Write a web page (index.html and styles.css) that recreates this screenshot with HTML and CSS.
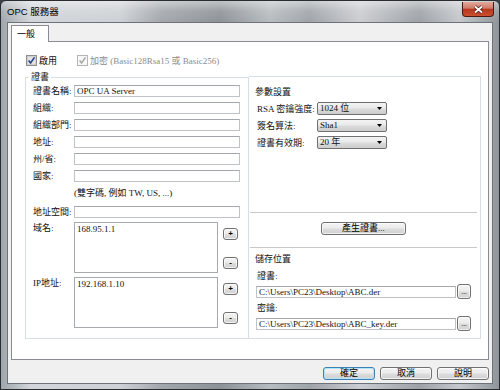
FILE: index.html
```html
<!DOCTYPE html>
<html>
<head>
    <title>OPC 服務器</title>
    <link rel="stylesheet" href="styles.css">
</head>
<body>
    <div class="window">
        <!-- glass title bar -->
        <div class="titlebar">
            <span class="title">OPC 服務器</span>
            <span class="close-btn">
                <svg width="11" height="9" viewBox="0 0 11 9">
                    <path d="M2 1.5 L9 7.5 M9 1.5 L2 7.5" stroke="#4a1810" stroke-width="3.4" fill="none"/>
                    <path d="M2 1.5 L9 7.5 M9 1.5 L2 7.5" stroke="#fff" stroke-width="1.8" fill="none"/>
                </svg>
            </span>
        </div>

        <div class="client">
            <div class="tabs"><span class="tab">一般</span></div>

            <div class="tab-page">
                <div class="checks">
                    <span class="check">
                        <svg width="11" height="11" viewBox="0 0 11 11">
                            <rect x="0.5" y="0.5" width="10" height="10" fill="#f6f6f6" stroke="#8e8f8f"/>
                            <rect x="1.5" y="1.5" width="8" height="8" fill="#e4e4e4" stroke="#cfcfcf"/>
                            <path d="M2.6 5.4 L4.6 7.9 L8.5 2.4" fill="none" stroke="#23418c" stroke-width="1.6"/>
                        </svg>
                        啟用
                    </span>
                    <span class="check disabled">
                        <svg width="11" height="11" viewBox="0 0 11 11">
                            <rect x="0.5" y="0.5" width="10" height="10" fill="#f7f7f7" stroke="#b5b5b5"/>
                            <path d="M2.6 5.4 L4.6 7.9 L8.5 2.4" fill="none" stroke="#a8a8a8" stroke-width="1.6"/>
                        </svg>
                        加密 (Basic128Rsa15 或 Basic256)
                    </span>
                </div>

                <div class="panels">
                    <fieldset class="cert-group">
                        <legend>證書</legend>
                        <div class="field-row"><span class="field-label">證書名稱:</span><span class="textbox">OPC UA Server</span></div>
                        <div class="field-row"><span class="field-label">組織:</span><span class="textbox"></span></div>
                        <div class="field-row"><span class="field-label">組織部門:</span><span class="textbox"></span></div>
                        <div class="field-row"><span class="field-label">地址:</span><span class="textbox"></span></div>
                        <div class="field-row"><span class="field-label">州/省:</span><span class="textbox"></span></div>
                        <div class="field-row"><span class="field-label">國家:</span><span class="textbox"></span></div>
                        <div class="hint">(雙字碼, 例如 TW, US, ...)</div>
                        <div class="field-row addr-row"><span class="field-label">地址空間:</span><span class="textbox"></span></div>
                        <div class="list-row">
                            <span class="field-label">域名:</span>
                            <div class="listbox">168.95.1.1</div>
                            <div class="list-btns">
                                <span class="btn small-btn">+</span>
                                <span class="btn small-btn">-</span>
                            </div>
                        </div>
                        <div class="list-row">
                            <span class="field-label">IP地址:</span>
                            <div class="listbox">192.168.1.10</div>
                            <div class="list-btns">
                                <span class="btn small-btn">+</span>
                                <span class="btn small-btn">-</span>
                            </div>
                        </div>
                    </fieldset>

                    <div class="param-panel">
                        <div class="param-section">
                            <div class="section-title">參數設置</div>
                            <div class="param-row">
                                <span class="param-label">RSA 密鑰強度:</span>
                                <span class="combo"><span class="combo-text">1024 位</span><svg width="5" height="3" viewBox="0 0 5 3"><path d="M0 0 H5 L2.5 3 Z" fill="#000"/></svg></span>
                            </div>
                            <div class="param-row">
                                <span class="param-label">簽名算法:</span>
                                <span class="combo"><span class="combo-text">Sha1</span><svg width="5" height="3" viewBox="0 0 5 3"><path d="M0 0 H5 L2.5 3 Z" fill="#000"/></svg></span>
                            </div>
                            <div class="param-row">
                                <span class="param-label">證書有效期:</span>
                                <span class="combo"><span class="combo-text">20 年</span><svg width="5" height="3" viewBox="0 0 5 3"><path d="M0 0 H5 L2.5 3 Z" fill="#000"/></svg></span>
                            </div>
                        </div>

                        <div class="generate"><span class="btn gen-btn">產生證書...</span></div>

                        <div class="storage">
                            <div class="section-title">儲存位置</div>
                            <div class="path-label">證書:</div>
                            <div class="path-row"><span class="textbox">C:\Users\PC23\Desktop\ABC.der</span><span class="btn browse-btn">...</span></div>
                            <div class="path-label key-label">密鑰:</div>
                            <div class="path-row"><span class="textbox">C:\Users\PC23\Desktop\ABC_key.der</span><span class="btn browse-btn">...</span></div>
                        </div>
                    </div>
                </div>
            </div>

            <div class="dialog-buttons">
                <span class="btn dlg-btn default">確定</span>
                <span class="btn dlg-btn">取消</span>
                <span class="btn dlg-btn">說明</span>
            </div>
        </div>
    </div>
</body>
</html>
```

FILE: styles.css
```css
body {
    margin: 0;
    font-family: "Liberation Serif", "Noto Sans CJK TC", serif;
    font-size: 9px;
    line-height: 12px;
    color: #111;
    background: #3b4148;
}

.window {
    width: 500px;
    height: 390px;
    box-sizing: border-box;
    border: 1px solid #2a2d30;
    border-radius: 6px 6px 0 0;
    background:
        linear-gradient(to bottom, rgba(255, 255, 255, 0.45) 0, rgba(255, 255, 255, 0.12) 10px, rgba(255, 255, 255, 0) 21px),
        linear-gradient(to right, #9fa6ac 0, #d2d6da 6%, #cdd1d5 24%, #a3a8ad 32%, #8d9297 44%, #b7bcc0 54%, #9fa4a9 62%, #cacdd1 72%, #9da2a7 84%, #c4c8cc 92%, #8f959a 100%);
}

.titlebar {
    height: 21px;
    display: flex;
    align-items: flex-start;
    padding: 0 5px 0 6px;
}

.title {
    flex: 1;
    font-family: "Liberation Sans", "Noto Sans CJK TC", sans-serif;
    font-size: 9.5px;
    line-height: 21px;
    color: #000;
}

.close-btn {
    width: 32px;
    height: 15px;
    margin-top: 1px;
    box-sizing: border-box;
    border: 1px solid #4a1a14;
    border-top: none;
    border-radius: 0 0 4px 4px;
    background: linear-gradient(#e2a89c, #d07a68 45%, #b9351f 50%, #c9502f);
    display: flex;
    align-items: center;
    justify-content: center;
}

.client {
    margin: 0 6px;
    height: 362px;
    box-sizing: border-box;
    border: 1px solid #6c7278;
    background: #f0f0f0;
    padding: 2px 3px 0 3px;
}

.tabs {
    height: 16px;
    display: flex;
}

.tab {
    position: relative;
    z-index: 1;
    width: 38px;
    height: 17px;
    box-sizing: border-box;
    border: 1px solid #898c95;
    border-bottom: none;
    background: #fff;
    padding-left: 5px;
    line-height: 16px;
    color: #000;
}

.tab-page {
    height: 319px;
    box-sizing: border-box;
    border: 1px solid #898c95;
    background: #fff;
    padding: 12px 7px 20px 13px;
}

.checks {
    height: 13px;
    display: flex;
    align-items: center;
    margin-left: 1px;
}

.check {
    display: flex;
    align-items: center;
    gap: 2px;
    margin-right: 20px;
}

.check.disabled {
    color: #8c8c8c;
}

.panels {
    display: flex;
    margin-top: 4px;
}

.cert-group {
    width: 224px;
    box-sizing: border-box;
    margin: 0;
    padding: 2px 8px 10px 7px;
    min-inline-size: 0;
    border: 1px solid #d5dfe5;
}

.cert-group legend {
    padding: 0 2px;
    margin-left: -4px;
    line-height: 12px;
}

.field-row {
    display: flex;
    height: 12px;
    margin-bottom: 5px;
}

.field-label {
    width: 41px;
    flex-shrink: 0;
    line-height: 12px;
    white-space: nowrap;
}

.textbox {
    flex: 1;
    height: 12px;
    box-sizing: border-box;
    border: 1px solid #bfc3c8;
    border-top-color: #a3a6ac;
    background: #fff;
    padding-left: 2px;
    line-height: 10px;
    white-space: nowrap;
    overflow: hidden;
}

.hint {
    margin-left: 41px;
    height: 12px;
}

.addr-row {
    margin-top: 7px;
    margin-bottom: 4px;
}

.list-row {
    display: flex;
    height: 51px;
    margin-bottom: 4px;
}

.list-row:last-child {
    margin-bottom: 0;
}

.listbox {
    width: 144px;
    box-sizing: border-box;
    border: 1px solid #a6a9ae;
    background: #fff;
    padding: 1px 2px;
    line-height: 10px;
}

.list-btns {
    margin-left: 5px;
    padding-top: 6px;
    display: flex;
    flex-direction: column;
    gap: 17px;
}

.btn {
    box-sizing: border-box;
    border: 1px solid #707070;
    border-radius: 3px;
    background: linear-gradient(#f4f4f4, #ebebeb 48%, #dddddd 52%, #d0d0d0);
    box-shadow: inset 0 0 0 1px rgba(255, 255, 255, 0.7);
    display: flex;
    align-items: center;
    justify-content: center;
    color: #000;
}

.small-btn {
    width: 15px;
    height: 12px;
    font-family: "Liberation Sans", sans-serif;
    font-size: 8px;
    font-weight: bold;
    line-height: 10px;
}

.param-panel {
    flex: 1;
    margin-top: 5px;
    border: 1px solid #d5dfe5;
    border-left: none;
}

.param-section {
    padding: 9px 6px 0 6px;
}

.section-title {
    height: 12px;
}

.param-row {
    display: flex;
    align-items: center;
    height: 13px;
    margin-top: 4px;
    padding-left: 2px;
}

.param-label {
    width: 60px;
    flex-shrink: 0;
    white-space: nowrap;
}

.combo {
    width: 70px;
    height: 13px;
    box-sizing: border-box;
    border: 1px solid #707070;
    border-radius: 2px;
    background: linear-gradient(#f3f3f3, #e9e9e9 48%, #dcdcdc 52%, #cdcdcd);
    display: flex;
    align-items: center;
    padding: 0 4px 0 2px;
}

.combo-text {
    flex: 1;
    line-height: 11px;
}

.generate {
    margin: 63px 3px 0 1px;
    border-top: 1px solid #c9c9c9;
    border-bottom: 1px solid #c9c9c9;
    padding: 9px 0 12px;
    display: flex;
    justify-content: center;
}

.gen-btn {
    width: 85px;
    height: 13px;
    line-height: 11px;
}

.storage {
    padding: 0 9px 0 7px;
}

.storage .section-title {
    margin-top: 5px;
    margin-left: -1px;
}

.path-label {
    height: 12px;
    margin-top: 5px;
    padding-left: 1px;
}

.key-label {
    margin-top: 3px;
}

.path-row {
    display: flex;
    align-items: center;
    height: 15px;
    margin-top: 2px;
}

.browse-btn {
    width: 14px;
    height: 15px;
    margin-left: 1px;
    font-size: 7px;
    line-height: 10px;
}

.dialog-buttons {
    display: flex;
    justify-content: flex-end;
    gap: 5px;
    margin-top: 7px;
}

.dlg-btn {
    width: 52px;
    height: 13px;
    line-height: 11px;
}

.dlg-btn.default {
    border-color: #3c7fb1;
    box-shadow: inset 0 0 0 1px #b6e2f8;
}
```
